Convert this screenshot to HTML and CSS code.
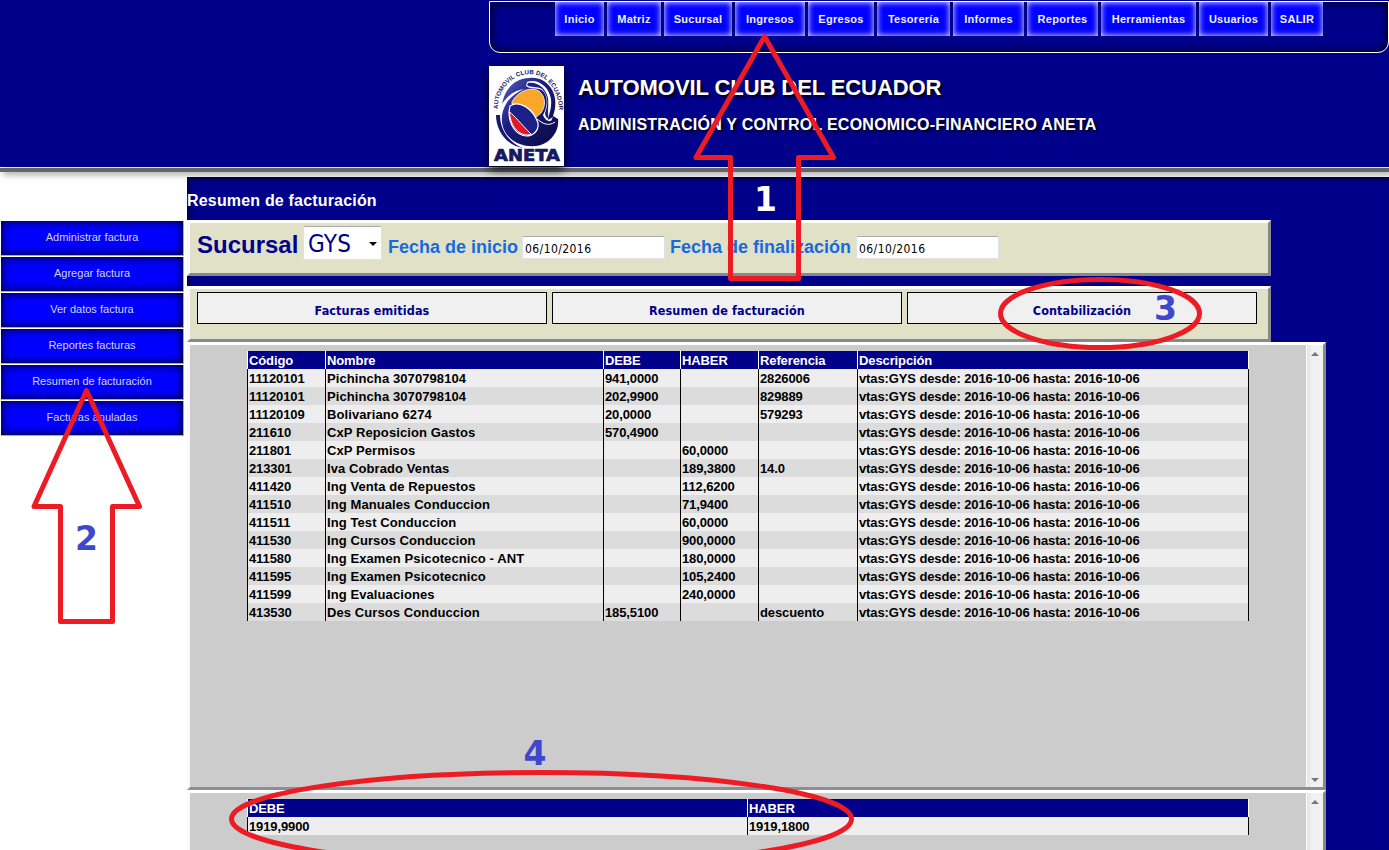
FILE: index.html
```html
<!DOCTYPE html>
<html lang="es">
<head>
<meta charset="utf-8">
<title>ANETA - Resumen de facturación</title>
<link rel="stylesheet" href="styles.css">
</head>
<body>
<header class="header">
  <nav class="topnav">
    <a>Inicio</a><a>Matriz</a><a>Sucursal</a><a>Ingresos</a><a>Egresos</a><a>Tesorería</a><a>Informes</a><a>Reportes</a><a>Herramientas</a><a>Usuarios</a><a>SALIR</a>
  </nav>
  <div class="brand">
    <svg class="logo" width="75" height="100" viewBox="0 0 75 100">
      <defs>
        <path id="arc" d="M9 43 C8 27 21 8 41 8 C57 8 70 24 70 46"/>
        <linearGradient id="ink" x1="0" y1="0" x2="1" y2="1"><stop offset="0" stop-color="#5860c0"/><stop offset=".4" stop-color="#1c1c80"/><stop offset="1" stop-color="#080840"/></linearGradient>
      </defs>
      <rect width="75" height="100" fill="#fff"/>
      <path d="M13 38 C16 22 27 12 40 12 C50 11 57 15 62 22 C68 31 67 42 64 50 L69 53 C70 62 66 70 58 76 C48 83 30 81 21 72 C12 64 10 50 17 38 C21 31 28 26 35 23 C26 24 18 30 13 38 Z" fill="url(#ink)"/>
      <path d="M38 16 C48 12 60 20 62 33 C63 42 60 48 59 54 L64 51 L62 55 C58 56 55 52 54 49 C58 42 60 31 54 25 C50 21 42 24 37 20 Z" fill="#fff"/>
      <path d="M39 17 C48 15 57 22 59 32 C60 41 58 47 60 53 C57 52 56 49 56 47 C59 39 60 30 53 23 C48 20 41 22 38 19 Z" fill="#20208a"/>
      <path d="M7 49 C7 66 19 80 34 82 C21 77 11 65 11 49 Z" fill="#181870"/>
      <path d="M23 36 C28 26 41 20 50 25 C57 31 57 40 52 47 L46 52 C41 42 34 37 23 38 Z" fill="#f9a72b" stroke="#fff" stroke-width=".8"/>
      <path d="M21 40 C30 34 44 42 49 57 C50 65 44 70 37 70 C27 69 20 59 20 46 Z" fill="#1a2088" stroke="#fff" stroke-width="1.200"/>
      <path d="M20.500 46 C25 49 32 58 42 68 C34 72 21 63 20.500 46 Z" fill="#e01824" stroke="#fff" stroke-width="1"/>
      <path d="M48 53 C53 57 59 61 66 56" fill="none" stroke="#fff" stroke-width="1"/>
      <text class="logo-arc"><textPath href="#arc" textLength="104">AUTOMOVIL CLUB DEL ECUADOR</textPath></text>
      <text class="logo-name" x="5" y="94.500" textLength="66" lengthAdjust="spacingAndGlyphs">ANETA</text>
    </svg>
    <div class="titles">
      <h1>AUTOMOVIL CLUB DEL ECUADOR</h1>
      <h2>ADMINISTRACIÓN Y CONTROL ECONOMICO-FINANCIERO ANETA</h2>
    </div>
  </div>
</header>
<div class="rule"></div>
<div class="page">
  <aside class="side">
    <a>Administrar factura</a><a>Agregar factura</a><a>Ver datos factura</a><a>Reportes facturas</a><a>Resumen de facturación</a><a>Facturas anuladas</a>
  </aside>
  <main class="main">
    <h3>Resumen de facturación</h3>
    <section class="panel filters">
      <span class="branch">Sucursal</span>
      <div class="select"><span>GYS</span><i></i></div>
      <label class="from">Fecha de inicio</label>
      <input value="06/10/2016">
      <label class="to">Fecha de finalización</label>
      <input value="06/10/2016">
    </section>
    <section class="panel tabs">
      <button>Facturas emitidas</button><button>Resumen de facturación</button><button>Contabilización</button>
    </section>
    <section class="results detail">
      <table>
        <colgroup><col class="c1"><col class="c2"><col class="c3"><col class="c4"><col class="c5"><col class="c6"></colgroup>
        <thead><tr><th>Código</th><th>Nombre</th><th>DEBE</th><th>HABER</th><th>Referencia</th><th>Descripción</th></tr></thead>
        <tbody>
        <tr><td>11120101</td><td>Pichincha 3070798104</td><td>941,0000</td><td></td><td>2826006</td><td>vtas:GYS desde: 2016-10-06 hasta: 2016-10-06</td></tr>
        <tr><td>11120101</td><td>Pichincha 3070798104</td><td>202,9900</td><td></td><td>829889</td><td>vtas:GYS desde: 2016-10-06 hasta: 2016-10-06</td></tr>
        <tr><td>11120109</td><td>Bolivariano 6274</td><td>20,0000</td><td></td><td>579293</td><td>vtas:GYS desde: 2016-10-06 hasta: 2016-10-06</td></tr>
        <tr><td>211610</td><td>CxP Reposicion Gastos</td><td>570,4900</td><td></td><td></td><td>vtas:GYS desde: 2016-10-06 hasta: 2016-10-06</td></tr>
        <tr><td>211801</td><td>CxP Permisos</td><td></td><td>60,0000</td><td></td><td>vtas:GYS desde: 2016-10-06 hasta: 2016-10-06</td></tr>
        <tr><td>213301</td><td>Iva Cobrado Ventas</td><td></td><td>189,3800</td><td>14.0</td><td>vtas:GYS desde: 2016-10-06 hasta: 2016-10-06</td></tr>
        <tr><td>411420</td><td>Ing Venta de Repuestos</td><td></td><td>112,6200</td><td></td><td>vtas:GYS desde: 2016-10-06 hasta: 2016-10-06</td></tr>
        <tr><td>411510</td><td>Ing Manuales Conduccion</td><td></td><td>71,9400</td><td></td><td>vtas:GYS desde: 2016-10-06 hasta: 2016-10-06</td></tr>
        <tr><td>411511</td><td>Ing Test Conduccion</td><td></td><td>60,0000</td><td></td><td>vtas:GYS desde: 2016-10-06 hasta: 2016-10-06</td></tr>
        <tr><td>411530</td><td>Ing Cursos Conduccion</td><td></td><td>900,0000</td><td></td><td>vtas:GYS desde: 2016-10-06 hasta: 2016-10-06</td></tr>
        <tr><td>411580</td><td>Ing Examen Psicotecnico - ANT</td><td></td><td>180,0000</td><td></td><td>vtas:GYS desde: 2016-10-06 hasta: 2016-10-06</td></tr>
        <tr><td>411595</td><td>Ing Examen Psicotecnico</td><td></td><td>105,2400</td><td></td><td>vtas:GYS desde: 2016-10-06 hasta: 2016-10-06</td></tr>
        <tr><td>411599</td><td>Ing Evaluaciones</td><td></td><td>240,0000</td><td></td><td>vtas:GYS desde: 2016-10-06 hasta: 2016-10-06</td></tr>
        <tr><td>413530</td><td>Des Cursos Conduccion</td><td>185,5100</td><td></td><td>descuento</td><td>vtas:GYS desde: 2016-10-06 hasta: 2016-10-06</td></tr>
        </tbody>
      </table>
      <div class="scroll"><i class="up"></i><i class="down"></i></div>
    </section>
    <section class="results totals">
      <table>
        <colgroup><col class="t1"><col class="t2"></colgroup>
        <thead><tr><th>DEBE</th><th>HABER</th></tr></thead>
        <tbody><tr><td>1919,9900</td><td>1919,1800</td></tr></tbody>
      </table>
      <div class="scroll"><i class="up"></i></div>
    </section>
  </main>
</div>
<svg class="notes" width="1389" height="850" viewBox="0 0 1389 850">
  <g class="ink">
    <path d="M764.500 36.500 L833.500 157.500 H798.500 V278.500 H730.500 V157.500 H696 Z"/>
    <path d="M86.500 390.500 L139.500 506.500 H112.500 V621.500 H60.500 V506.500 H34 Z"/>
    <ellipse cx="1100" cy="313.500" rx="99.500" ry="34"/>
    <ellipse cx="541.500" cy="819" rx="310" ry="46.500"/>
  </g>
  <g class="num">
    <text class="light" x="754" y="211">1</text>
    <text x="75" y="550">2</text>
    <text x="1154" y="320">3</text>
    <text x="523.500" y="765">4</text>
  </g>
</svg>
</body>
</html>
```
FILE: styles.css
```css
* { box-sizing: border-box; }
html, body { margin: 0; height: 850px; overflow: hidden; }
body { position: relative; display: flex; flex-direction: column; background: #fff; font-family: "Liberation Sans", Arial, sans-serif; }
h1, h2, h3 { margin: 0; color: #fff; white-space: nowrap; }

.header { flex: none; height: 168px; padding: 1px 0 0 489px; background: #00008b; border-bottom: 1px solid #fff; }
.topnav { display: grid; grid-template-columns: 49px 54px 68px 70px 66px 73px 71px 71px 95px 69px 52px; gap: 3px; height: 52px; padding-left: 65px; border: 1px solid #fff; border-radius: 0 0 11px 11px; box-shadow: inset 0 0 10px #000; }
.topnav a { height: 34px; line-height: 34px; text-align: center; font-size: 11px; font-weight: bold; letter-spacing: .27px; color: #eef; background: #00f; box-shadow: inset 0 0 6px #fff; white-space: nowrap; }
.brand { display: flex; margin-top: 13px; }
.logo { position: relative; z-index: 2; flex: none; box-shadow: 0 3px 10px #000; }
.logo-arc { font-size: 6.200px; font-weight: bold; fill: #181860; }
.logo-name { font-family: "DejaVu Sans", sans-serif; font-size: 15.500px; font-weight: bold; fill: #181860; stroke: #181860; stroke-width: .7px; }
.titles { padding: 9px 0 0 14px; text-shadow: 2px 2px 3px #000; }
h1 { font-size: 22px; line-height: 26px; letter-spacing: -.08px; }
h2 { margin-top: 14px; font-size: 16px; line-height: 20px; letter-spacing: .25px; }

.rule { flex: none; height: 4px; background: #666; box-shadow: 3px 2px 6px rgba(0,0,0,.5); }
.page { display: flex; flex: 1; padding-top: 5px; min-height: 0; }
.side { display: flex; flex-direction: column; gap: 1px; width: 187px; padding: 44px 3px 0 1px; flex: none; }
.side a { height: 35px; border-right: 1px solid #aaa; border-bottom: 1px solid #aaa; background: #00f; box-shadow: inset 0 0 10px #000; color: #d4d4e8; font-size: 11px; line-height: 33px; text-align: center; letter-spacing: .02px; }

.main { flex: 1; background: #00008b; box-shadow: inset 3px 3px 5px -1px #000030; min-width: 0; }
h3 { height: 43px; font-size: 16px; line-height: 48px; letter-spacing: .18px; }
.panel { width: 1084px; height: 56px; display: flex; align-items: flex-start; background: #e1e1c8; border: 3px solid; border-color: #fff #85898c #85898c #f8faff; }
.filters { padding-left: 7px; white-space: nowrap; }
.branch { width: 106px; margin-top: 8px; font-size: 24px; line-height: 28px; font-weight: bold; color: #00008b; }
.select { display: flex; align-items: center; justify-content: space-between; width: 79px; height: 34px; margin-top: 3px; padding: 4px 4px 2px; background: #fff; border: 1px solid #dde1e8; border-top-color: #aaa; border-radius: 2px; font-family: "DejaVu Sans Condensed", "DejaVu Sans", sans-serif; font-size: 24px; line-height: 28px; letter-spacing: .3px; color: #00008b; }
.select i { border: 4px solid transparent; border-top-color: #000; border-bottom: 0; }
label { margin-top: 13px; font-size: 18px; line-height: 22px; font-weight: bold; color: #176ade; }
.from { width: 140px; padding-left: 6px; }
.to { width: 191px; padding-left: 5px; }
input { width: 143px; height: 23px; margin-top: 13px; padding: 3px 2px 0; border: 1px solid #dde1e8; border-top-color: #aaa; border-radius: 2px; background: #fff; color: #000; font-family: "DejaVu Sans Condensed", "DejaVu Sans", sans-serif; font-size: 12px; letter-spacing: .42px; }
.tabs { gap: 5px; margin-top: 10px; padding: 3px 0 0 7px; }
.tabs button { width: 350px; height: 32px; padding: 5px 0 0; border: 1px solid #000; background: #f0f0f0; color: #00008b; font-family: "DejaVu Sans Condensed", "DejaVu Sans", sans-serif; font-size: 12.500px; font-weight: bold; letter-spacing: .1px; }

.results { display: flex; align-items: flex-start; justify-content: space-between; width: 1139px; padding-left: 57px; background: #ccc; border: 3px solid; border-color: #fff #85898c #8b8f91 #f8fafc; }
.detail { height: 448px; }
.totals { height: 90px; }
table { width: 1002px; margin-top: 6px; table-layout: fixed; border-spacing: 0; border-collapse: separate; font-size: 13px; font-weight: bold; letter-spacing: -.11px; }
th, td { height: 18px; padding: 2px 0 0 1px; line-height: 16px; text-align: left; white-space: nowrap; border-left: 1px solid #000; }
.detail td:nth-child(2) { letter-spacing: .09px; }
th { color: #fff; background: #00008b; border-color: #fff; }
th:last-child, td:last-child { border-right: 1px solid #000; }
th:last-child { border-right-color: #fff; }
tbody tr { background: #eee; }
tbody tr:nth-child(even) { background: #dcdcdc; }
.c1 { width: 78px; } .c2 { width: 278px; } .c3 { width: 77px; } .c4 { width: 78px; } .c5 { width: 99px; } .c6 { width: 392px; }
.t1 { width: 500px; } .t2 { width: 502px; }
.scroll { display: flex; flex-direction: column; justify-content: space-between; align-items: center; align-self: stretch; width: 17px; padding: 7px 0 5px; background: linear-gradient(90deg, #e3e3e3, #f1f1f1 5px); border-left: 1px solid #fff; }
.scroll i { border: 4px solid transparent; }
.scroll .up { border-top: 0; border-bottom-color: #777; }
.scroll .down { border-bottom: 0; border-top-color: #777; }

.notes { position: absolute; left: 0; top: 0; z-index: 5; pointer-events: none; }
.ink { fill: none; stroke: #ed1c24; stroke-width: 5px; stroke-linejoin: round; }
.num { font-family: "DejaVu Sans", sans-serif; font-size: 33px; font-weight: bold; fill: #3f48cc; }
.light { fill: #fff; }
```
